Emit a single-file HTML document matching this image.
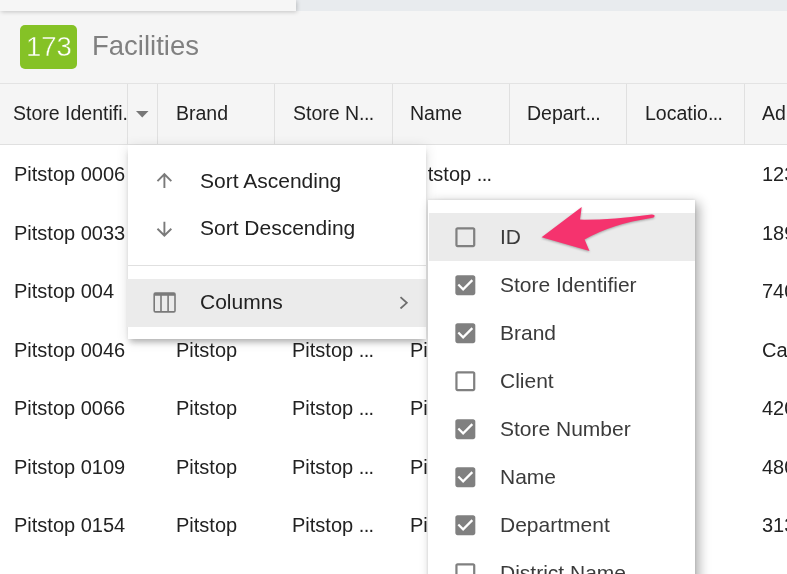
<!DOCTYPE html>
<html><head><meta charset="utf-8">
<style>
*{box-sizing:border-box;margin:0;padding:0}
html,body{width:787px;height:574px;overflow:hidden;background:#fff;font-family:"Liberation Sans",sans-serif;position:relative}
.abs{position:absolute}
.t{position:absolute;white-space:pre;color:#222;will-change:transform}
#topbar{left:0;top:0;width:787px;height:84px;background:#f5f5f5;border-bottom:1px solid #e3e3e3}
#strip-r{left:296px;top:0;width:491px;height:11px;background:#e8ebee}
#strip-l{left:0;top:0;width:296px;height:11px;background:#f6f6f6;box-shadow:1px 1px 4px rgba(0,0,0,.2)}
#badge{left:20px;top:25px;width:57px;height:44px;background:#85c226;border-radius:5px}
#hdr{left:0;top:84px;width:787px;height:61px;background:#f5f5f5;border-bottom:1px solid #e0e0e0}
.sep{position:absolute;top:84px;width:1px;height:60px;background:#e0e0e0}
#menubg{left:128px;top:145px;width:298px;height:194px;background:#fff;box-shadow:0 5px 6px -2px rgba(0,0,0,.25),0 2px 12px rgba(0,0,0,.12)}
#sub{left:428px;top:200px;width:267px;height:400px;background:#fff;box-shadow:4px 3px 11px rgba(0,0,0,.32),0 0 3px rgba(0,0,0,.12)}
.cb{position:absolute;width:20px;height:20px;border:2.5px solid #7a7a7a;border-radius:3px}
.cb.on{background:#7a7a7a}
</style></head><body>
<div class="abs" id="topbar"></div>
<div class="abs" id="strip-r"></div>
<div class="abs" id="strip-l"></div>
<div class="abs" id="badge"></div>
<div class="t " style="left:25.90px;top:30.27px;font-size:27.5px;line-height:33px;color:#fff;-webkit-text-stroke:0.45px #85c226">173</div>

<div class="t " style="left:91.60px;top:28.97px;font-size:27.5px;line-height:33px;color:#808080;">Facilities</div>

<div class="abs" id="hdr"></div>
<div class="sep" style="left:127px"></div>
<div class="sep" style="left:157px"></div>
<div class="sep" style="left:274px"></div>
<div class="sep" style="left:392px"></div>
<div class="sep" style="left:509px"></div>
<div class="sep" style="left:626px"></div>
<div class="sep" style="left:744px"></div>
<div class="t " style="left:13.00px;top:101.94px;font-size:19.5px;line-height:23px;width:114px;overflow:hidden">Store Identifi.</div>

<svg class="abs" style="left:136px;top:111px" width="13" height="7"><path d="M0 0H12.5L6.25 6.5Z" fill="#777"/></svg>
<div class="t " style="left:175.50px;top:101.94px;font-size:19.5px;line-height:23px;">Brand</div>

<div class="t " style="left:292.50px;top:101.94px;font-size:19.5px;line-height:23px;">Store N<span style="letter-spacing:-0.6px">...</span></div>

<div class="t " style="left:410.00px;top:101.94px;font-size:19.5px;line-height:23px;">Name</div>

<div class="t " style="left:527.00px;top:101.94px;font-size:19.5px;line-height:23px;">Depart<span style="letter-spacing:-0.6px">...</span></div>

<div class="t " style="left:644.50px;top:101.94px;font-size:19.5px;line-height:23px;">Locatio<span style="letter-spacing:-0.6px">...</span></div>

<div class="t " style="left:762.00px;top:101.94px;font-size:19.5px;line-height:23px;">Ad</div>

<div class="t " style="left:13.50px;top:162.17px;font-size:20px;line-height:24px;">Pitstop 0006</div>

<div class="t " style="left:175.50px;top:162.17px;font-size:20px;line-height:24px;">Pitstop</div>

<div class="t " style="left:292.30px;top:162.17px;font-size:20px;line-height:24px;">Pitstop <span style="letter-spacing:-0.6px">...</span></div>

<div class="t " style="left:409.80px;top:162.17px;font-size:20px;line-height:24px;clip-path:inset(0 0 0 17.5px);">Pitstop <span style="letter-spacing:-0.6px">...</span></div>

<div class="t " style="left:761.70px;top:162.17px;font-size:20px;line-height:24px;">1234 Main St</div>

<div class="t " style="left:13.50px;top:220.70px;font-size:20px;line-height:24px;">Pitstop 0033</div>

<div class="t " style="left:175.50px;top:220.70px;font-size:20px;line-height:24px;">Pitstop</div>

<div class="t " style="left:292.30px;top:220.70px;font-size:20px;line-height:24px;">Pitstop <span style="letter-spacing:-0.6px">...</span></div>

<div class="t " style="left:761.70px;top:220.70px;font-size:20px;line-height:24px;">189 Main</div>

<div class="t " style="left:13.50px;top:279.23px;font-size:20px;line-height:24px;">Pitstop 004</div>

<div class="t " style="left:175.50px;top:279.23px;font-size:20px;line-height:24px;">Pitstop</div>

<div class="t " style="left:292.30px;top:279.23px;font-size:20px;line-height:24px;">Pitstop <span style="letter-spacing:-0.6px">...</span></div>

<div class="t " style="left:761.70px;top:279.23px;font-size:20px;line-height:24px;">740 Main</div>

<div class="t " style="left:13.50px;top:337.76px;font-size:20px;line-height:24px;">Pitstop 0046</div>

<div class="t " style="left:175.50px;top:337.76px;font-size:20px;line-height:24px;">Pitstop</div>

<div class="t " style="left:292.30px;top:337.76px;font-size:20px;line-height:24px;">Pitstop <span style="letter-spacing:-0.6px">...</span></div>

<div class="t " style="left:409.80px;top:337.76px;font-size:20px;line-height:24px;">Pitstop <span style="letter-spacing:-0.6px">...</span></div>

<div class="t " style="left:761.70px;top:337.76px;font-size:20px;line-height:24px;">Ca</div>

<div class="t " style="left:13.50px;top:396.29px;font-size:20px;line-height:24px;">Pitstop 0066</div>

<div class="t " style="left:175.50px;top:396.29px;font-size:20px;line-height:24px;">Pitstop</div>

<div class="t " style="left:292.30px;top:396.29px;font-size:20px;line-height:24px;">Pitstop <span style="letter-spacing:-0.6px">...</span></div>

<div class="t " style="left:409.80px;top:396.29px;font-size:20px;line-height:24px;">Pitstop <span style="letter-spacing:-0.6px">...</span></div>

<div class="t " style="left:761.70px;top:396.29px;font-size:20px;line-height:24px;">4200</div>

<div class="t " style="left:13.50px;top:454.82px;font-size:20px;line-height:24px;">Pitstop 0109</div>

<div class="t " style="left:175.50px;top:454.82px;font-size:20px;line-height:24px;">Pitstop</div>

<div class="t " style="left:292.30px;top:454.82px;font-size:20px;line-height:24px;">Pitstop <span style="letter-spacing:-0.6px">...</span></div>

<div class="t " style="left:409.80px;top:454.82px;font-size:20px;line-height:24px;">Pitstop <span style="letter-spacing:-0.6px">...</span></div>

<div class="t " style="left:761.70px;top:454.82px;font-size:20px;line-height:24px;">4800</div>

<div class="t " style="left:13.50px;top:513.35px;font-size:20px;line-height:24px;">Pitstop 0154</div>

<div class="t " style="left:175.50px;top:513.35px;font-size:20px;line-height:24px;">Pitstop</div>

<div class="t " style="left:292.30px;top:513.35px;font-size:20px;line-height:24px;">Pitstop <span style="letter-spacing:-0.6px">...</span></div>

<div class="t " style="left:409.80px;top:513.35px;font-size:20px;line-height:24px;">Pitstop <span style="letter-spacing:-0.6px">...</span></div>

<div class="t " style="left:761.70px;top:513.35px;font-size:20px;line-height:24px;">3130</div>

<div class="abs" id="menubg"></div>
<div class="abs" style="left:128px;top:144px;width:298px;height:195px">
<svg class="abs" style="left:24.9px;top:25.2px" width="22.8" height="22.8" viewBox="0 0 24 24"><path d="M4 12l1.41 1.41L11 7.83V20h2V7.83l5.58 5.59L20 12l-8-8-8 8z" fill="#7a7a7a"/></svg>
<svg class="abs" style="left:24.9px;top:74px" width="22.8" height="22.8" viewBox="0 0 24 24"><path d="M20 12l-1.41-1.41L13 16.17V4h-2v12.17l-5.58-5.59L4 12l8 8 8-8z" fill="#7a7a7a"/></svg>
<div class="t " style="left:72.30px;top:24.02px;font-size:21px;line-height:25px;">Sort Ascending</div>

<div class="t " style="left:72.30px;top:70.72px;font-size:21px;line-height:25px;">Sort Descending</div>

<div class="abs" style="left:0;top:121px;width:298px;height:1px;background:#e0e0e0"></div>
<div class="abs" style="left:-2px;top:135px;width:300px;height:48px;background:#ebebeb"></div>
<svg class="abs" style="left:25px;top:148px" width="23" height="21" viewBox="0 0 23 21"><path fill-rule="evenodd" fill="#7a7a7a" d="M2.4 0.2H20.8A2 2 0 0 1 22.8 2.2V18.7A2 2 0 0 1 20.8 20.7H2.4A2 2 0 0 1 0.4 18.7V2.2A2 2 0 0 1 2.4 0.2Z M2 3.8V18.9H7.2V3.8Z M8.8 3.8V18.9H14.3V3.8Z M15.9 3.8V18.9H21.2V3.8Z"/></svg>
<div class="t " style="left:72.30px;top:145.32px;font-size:21px;line-height:25px;">Columns</div>

<svg class="abs" style="left:270px;top:151px" width="12" height="14" viewBox="0 0 12 14"><path d="M2.5 2.2l6.3 5.6-6.3 5.7" fill="none" stroke="#6e6e6e" stroke-width="1.8"/></svg>
</div>
<div class="abs" id="sub">
<div class="abs" style="left:1px;top:13px;width:266px;height:48px;background:#ebebeb"></div>
</div>
<div class="abs" style="left:0;top:0;width:787px;height:574px;filter:blur(0.6px)">
<svg class="abs" style="left:451.67px;top:223.87px" width="26.67" height="26.67" viewBox="0 0 24 24"><path d="M19 5v14H5V5h14m0-2H5c-1.1 0-2 .9-2 2v14c0 1.1.9 2 2 2h14c1.1 0 2-.9 2-2V5c0-1.1-.9-2-2-2z" fill="#808080"/></svg>
<div class="t " style="left:500.20px;top:223.92px;font-size:21px;line-height:25px;color:#3b3b3b;">ID</div>

<svg class="abs" style="left:451.67px;top:271.87px" width="26.67" height="26.67" viewBox="0 0 24 24"><path d="M19 3H5c-1.11 0-2 .9-2 2v14c0 1.1.89 2 2 2h14c1.11 0 2-.9 2-2V5c0-1.1-.89-2-2-2zm-9 14l-5-5 1.41-1.41L10 14.17l7.59-7.59L19 8l-9 9z" fill="#808080"/></svg>
<div class="t " style="left:500.20px;top:271.92px;font-size:21px;line-height:25px;color:#3b3b3b;">Store Identifier</div>

<svg class="abs" style="left:451.67px;top:319.87px" width="26.67" height="26.67" viewBox="0 0 24 24"><path d="M19 3H5c-1.11 0-2 .9-2 2v14c0 1.1.89 2 2 2h14c1.11 0 2-.9 2-2V5c0-1.1-.89-2-2-2zm-9 14l-5-5 1.41-1.41L10 14.17l7.59-7.59L19 8l-9 9z" fill="#808080"/></svg>
<div class="t " style="left:500.20px;top:319.92px;font-size:21px;line-height:25px;color:#3b3b3b;">Brand</div>

<svg class="abs" style="left:451.67px;top:367.87px" width="26.67" height="26.67" viewBox="0 0 24 24"><path d="M19 5v14H5V5h14m0-2H5c-1.1 0-2 .9-2 2v14c0 1.1.9 2 2 2h14c1.1 0 2-.9 2-2V5c0-1.1-.9-2-2-2z" fill="#808080"/></svg>
<div class="t " style="left:500.20px;top:367.92px;font-size:21px;line-height:25px;color:#3b3b3b;">Client</div>

<svg class="abs" style="left:451.67px;top:415.87px" width="26.67" height="26.67" viewBox="0 0 24 24"><path d="M19 3H5c-1.11 0-2 .9-2 2v14c0 1.1.89 2 2 2h14c1.11 0 2-.9 2-2V5c0-1.1-.89-2-2-2zm-9 14l-5-5 1.41-1.41L10 14.17l7.59-7.59L19 8l-9 9z" fill="#808080"/></svg>
<div class="t " style="left:500.20px;top:415.92px;font-size:21px;line-height:25px;color:#3b3b3b;">Store Number</div>

<svg class="abs" style="left:451.67px;top:463.87px" width="26.67" height="26.67" viewBox="0 0 24 24"><path d="M19 3H5c-1.11 0-2 .9-2 2v14c0 1.1.89 2 2 2h14c1.11 0 2-.9 2-2V5c0-1.1-.89-2-2-2zm-9 14l-5-5 1.41-1.41L10 14.17l7.59-7.59L19 8l-9 9z" fill="#808080"/></svg>
<div class="t " style="left:500.20px;top:463.92px;font-size:21px;line-height:25px;color:#3b3b3b;">Name</div>

<svg class="abs" style="left:451.67px;top:511.87px" width="26.67" height="26.67" viewBox="0 0 24 24"><path d="M19 3H5c-1.11 0-2 .9-2 2v14c0 1.1.89 2 2 2h14c1.11 0 2-.9 2-2V5c0-1.1-.89-2-2-2zm-9 14l-5-5 1.41-1.41L10 14.17l7.59-7.59L19 8l-9 9z" fill="#808080"/></svg>
<div class="t " style="left:500.20px;top:511.92px;font-size:21px;line-height:25px;color:#3b3b3b;">Department</div>

<svg class="abs" style="left:451.67px;top:559.87px" width="26.67" height="26.67" viewBox="0 0 24 24"><path d="M19 5v14H5V5h14m0-2H5c-1.1 0-2 .9-2 2v14c0 1.1.9 2 2 2h14c1.1 0 2-.9 2-2V5c0-1.1-.9-2-2-2z" fill="#808080"/></svg>
<div class="t " style="left:500.20px;top:559.92px;font-size:21px;line-height:25px;color:#3b3b3b;">District Name</div>

</div>
<svg class="abs" style="left:0;top:0;filter:drop-shadow(0.5px 1.5px 1px rgba(0,0,0,.3))" width="787" height="574"><path d="M541.6 237.2L581.7 206.9L580.0 219.6Q610 220 651.5 214.4Q654.8 214.2 654.6 216.2Q654.3 217.8 651.3 218.1Q612 224 584.6 239.6L589.5 250.9Z" fill="#f5336e"/></svg>
</body></html>
